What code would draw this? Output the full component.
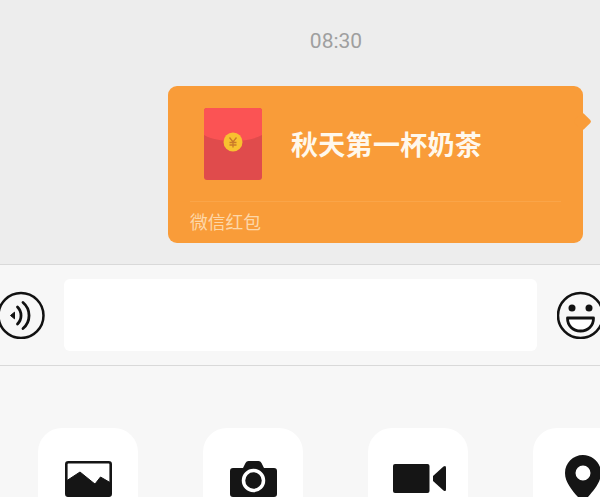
<script>
</script>

<div class="page">
  <section class="chat">
    <div class="time">08:30</div>
    <div class="row">
      <div class="bubble">
        <div class="main">
          <svg class="packet" width="58" height="72" viewBox="0 0 58 72">
            <rect width="58" height="72" rx="3" fill="#e04b4c" />
            <path d="M0 3a3 3 0 0 1 3-3h52a3 3 0 0 1 3 3v24c-14 8-44 8-58 0z" fill="#fb5354" />
            <circle cx="29" cy="34" r="9.500" fill="#f8c130" />
            <path d="M25.500 29.500l3.500 4.500l3.500-4.500M29 34v5.500M25.500 34.500h7M25.500 37h7" fill="none" stroke="#c9792a" stroke-width="1.300" />
          </svg>
          <div class="title">秋天第一杯奶茶</div>
        </div>
        <div class="foot">微信红包</div>
        <span class="tail"></span>
      </div>
    </div>
  </section>

  <section class="input">
    <svg class="voice" width="48" height="48" viewBox="0 0 48 48">
      <circle cx="21" cy="24.500" r="22.500" fill="none" stroke="#111" stroke-width="2.500" />
      <path d="M10.500 24.500l4-3.300v6.600z" fill="#111" stroke="#111" stroke-linejoin="round" />
      <path d="M17.500 16a12 12 0 0 1 0 17" fill="none" stroke="#111" stroke-width="2.800" stroke-linecap="round" />
      <path d="M23 11.500a17 17 0 0 1 0 26" fill="none" stroke="#111" stroke-width="2.800" stroke-linecap="round" />
    </svg>
    <div class="field"></div>
    <svg class="smile" width="48" height="48" viewBox="0 0 48 48">
      <circle cx="23.500" cy="24.500" r="22.500" fill="none" stroke="#111" stroke-width="2.500" />
      <circle cx="15" cy="17" r="3.500" fill="#111" />
      <circle cx="32" cy="17" r="3.500" fill="#111" />
      <path d="M10.500 27h26c0 8-5.500 13-13 13s-13-5-13-13z" fill="#fff" stroke="#111" stroke-width="2.800" stroke-linejoin="round" />
    </svg>
  </section>

  <section class="apps">
    <div class="app">
      <svg width="47" height="36" viewBox="0 0 47 36">
        <rect x="1.300" y="1.300" width="44.400" height="33.400" rx="2" fill="#fff" stroke="#151515" stroke-width="2.600" />
        <path d="M2 19.500L15 11l13 10.500 2 1.500 5.500-7 9.500 5.500V35H2z" fill="#151515" stroke="#151515" stroke-linejoin="round" />
      </svg>
    </div>
    <div class="app">
      <svg width="47" height="36" viewBox="0 0 47 36">
        <path d="M3 7h10l2.500-5q1-2 3-2h10q2 0 3 2L34 7h10q3 0 3 3v23q0 3-3 3H3q-3 0-3-3V10q0-3 3-3z" fill="#151515" />
        <circle cx="23.500" cy="19.500" r="10" fill="#151515" stroke="#fff" stroke-width="3.500" />
      </svg>
    </div>
    <div class="app">
      <svg class="video" width="53" height="29" viewBox="0 0 53 29">
        <rect width="36.500" height="29" rx="2" fill="#151515" />
        <path d="M40 12L50.500 2.500q2.500-1.500 2.500 1V25.500q0 2.500-2.500 1L40 17z" fill="#151515" />
      </svg>
    </div>
    <div class="app">
      <svg class="pin" width="36" height="48" viewBox="0 0 36 48">
        <path fill-rule="evenodd" d="M18 0C28 0 36 8 36 18 36 30 24 40 18 48 12 40 0 30 0 18 0 8 8 0 18 0zm0 10.500a7.500 7.500 0 1 0 0 15 7.500 7.500 0 0 0 0-15z" fill="#151515" />
      </svg>
    </div>
  </section>
</div>

<style>
  :global(body) {
    margin: 0;
    overflow: hidden;
  }

  .page {
    width: 600px;
    height: 497px;
    overflow: hidden;
    display: flex;
    flex-direction: column;
    background: #f7f7f7;
    font-family: "Noto Sans CJK SC", "Liberation Sans", sans-serif;
  }

  .chat {
    height: 265px;
    flex: none;
    box-sizing: border-box;
    background: #ededed;
    border-bottom: 1px solid #d9d9d9;
    padding-top: 29px;
  }

  .time {
    height: 24px;
    margin-bottom: 33px;
    padding-left: 72px;
    text-align: center;
    line-height: 24px;
    font-family: Roboto, "Liberation Sans", sans-serif;
    font-size: 21px;
    color: #9f9f9f;
  }

  .row {
    display: flex;
    justify-content: flex-end;
    padding-right: 17px;
  }

  .bubble {
    position: relative;
    width: 415px;
    height: 157px;
    border-radius: 9px;
    background: #f99c39;
    display: flex;
    flex-direction: column;
  }

  .main {
    height: 116px;
    flex: none;
    box-sizing: border-box;
    display: flex;
    align-items: center;
    gap: 29px;
    margin: 0 22px;
    padding-left: 14px;
    border-bottom: 1px solid #faa549;
  }

  .packet {
    flex: none;
  }

  .title {
    padding-top: 1px;
    color: #fff8ec;
    font-size: 27px;
    font-weight: 700;
    letter-spacing: 0.3px;
    line-height: 36px;
  }

  .foot {
    padding: 6px 0 0 22px;
    color: #fdd7a8;
    font-size: 17.800px;
    line-height: 26px;
  }

  .tail {
    position: absolute;
    right: -6px;
    top: 29px;
    width: 13px;
    height: 13px;
    background: #f99c39;
    transform: rotate(45deg);
    border-radius: 2px;
  }

  .input {
    height: 101px;
    flex: none;
    box-sizing: border-box;
    display: flex;
    align-items: center;
    gap: 20px;
    border-bottom: 1px solid #d9d9d9;
  }

  .voice,
  .smile {
    flex: none;
  }

  .field {
    width: 473px;
    height: 72px;
    flex: none;
    margin-left: -4px;
    background: #fff;
    border-radius: 6px;
  }

  .apps {
    flex: 1;
    display: flex;
    gap: 65px;
    padding: 62px 0 0 38px;
  }

  .app {
    width: 100px;
    height: 100px;
    flex: none;
    border-radius: 24px;
    background: #fff;
    display: flex;
    justify-content: center;
    align-items: flex-start;
    padding-top: 33px;
    box-sizing: border-box;
  }

  .video {
    margin: 3px 0 0 3px;
  }

  .pin {
    margin-top: -6px;
  }
</style>
